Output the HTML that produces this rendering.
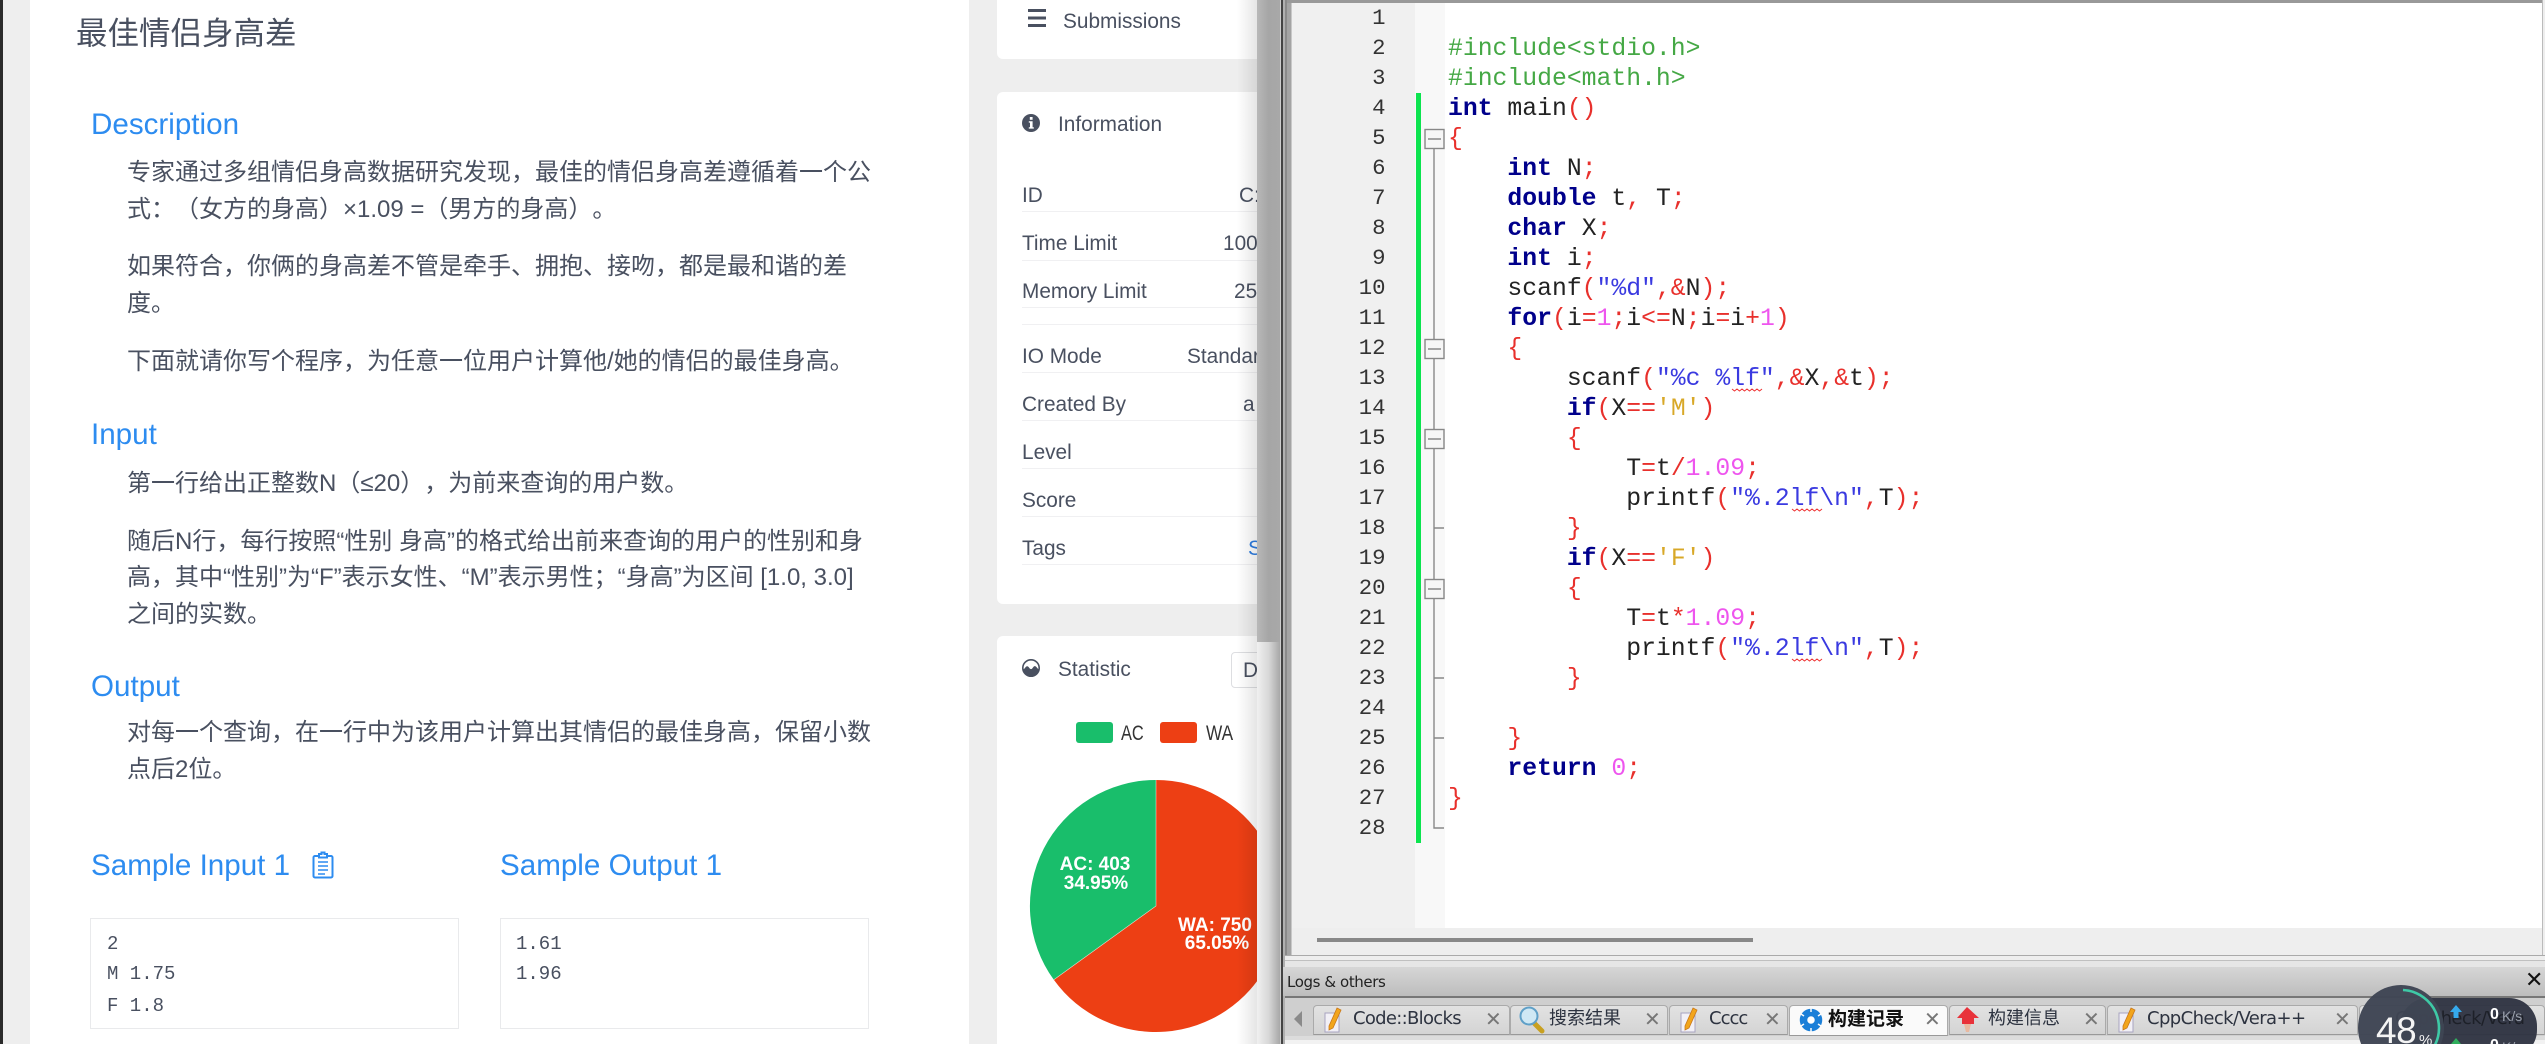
<!DOCTYPE html>
<html lang="zh-CN">
<head>
<meta charset="utf-8">
<title>最佳情侣身高差</title>
<style>
html,body{margin:0;padding:0;width:2545px;height:1044px;overflow:hidden;background:#eee}
body{position:relative;font-family:"Liberation Sans","Noto Sans CJK SC",sans-serif;color:#495060;text-spacing-trim:space-all}
.a{position:absolute}
.t{position:absolute;white-space:nowrap;line-height:40px;height:40px;margin-top:1.5px}
.d{font-size:24px;left:127px;color:#495060}
.h{font-size:29.6px;left:91px;color:#2d8cf0}
.r{font-size:20.8px;left:1022px;color:#495060}
.v{font-size:20.8px;color:#495060}
.b{position:absolute;left:1022px;width:235px;height:1px;background:#f0f0f2}
.m{font-family:"Liberation Mono",monospace;font-size:19px;color:#495060}
.card{position:absolute;background:#fff;border-radius:6px}
.pl{font-size:19px;font-weight:bold;color:#fff;width:100px;text-align:center;margin-top:0}
pre{margin:0;font-family:"Liberation Mono",monospace}
#code{position:absolute;left:1448px;top:3.5px;font-size:24.75px;line-height:30px;color:#222}
#nums{position:absolute;left:1300px;width:85.5px;top:3px;text-align:right;font-size:22.3px;line-height:30px;color:#333}
.k{color:#00008b;font-weight:bold}.o{color:#e8302c}.n{color:#ee55ee}.s{color:#3a3ae0}.c{color:#d8a828}.p{color:#45a845}
.tab{position:absolute;top:1005px;height:30px;background:linear-gradient(#e2e2e2,#d4d4d4);border:1px solid #aaa;border-bottom:1px solid #999;border-radius:4px 4px 0 0;box-sizing:border-box}
.tt{position:absolute;top:999px;line-height:40px;height:40px;white-space:nowrap;font-family:"DejaVu Sans","Noto Sans CJK SC",sans-serif;color:#2d3340}
.x{position:absolute;top:999px;line-height:40px;font-family:"DejaVu Sans",sans-serif;font-size:20px;color:#777}
</style>
</head>
<body>

<!-- LEFT PAGE -->
<div class="a" style="left:0;top:0;width:1257px;height:1044px;overflow:hidden;background:#eee">
  <div class="a" style="left:0;top:0;width:3px;height:1044px;background:#2b2b2b"></div>
  <div class="card" style="left:30px;top:-10px;width:939px;height:1070px;border-radius:0"></div>

  <div class="t" style="left:76px;top:11px;font-size:31.5px;color:#495060">最佳情侣身高差</div>

  <div class="t h" style="top:103px">Description</div>
  <div class="t d" style="top:151px">专家通过多组情侣身高数据研究发现，最佳的情侣身高差遵循着一个公</div>
  <div class="t d" style="top:188px">式：（女方的身高）×1.09 =（男方的身高）。</div>
  <div class="t d" style="top:245px">如果符合，你俩的身高差不管是牵手、拥抱、接吻，都是最和谐的差</div>
  <div class="t d" style="top:282px">度。</div>
  <div class="t d" style="top:340px">下面就请你写个程序，为任意一位用户计算他/她的情侣的最佳身高。</div>

  <div class="t h" style="top:413px">Input</div>
  <div class="t d" style="top:462px">第一行给出正整数N（≤20），为前来查询的用户数。</div>
  <div class="t d" style="top:520px">随后N行，每行按照“性别 身高”的格式给出前来查询的用户的性别和身</div>
  <div class="t d" style="top:556px">高，其中“性别”为“F”表示女性、“M”表示男性；“身高”为区间 [1.0, 3.0]</div>
  <div class="t d" style="top:593px">之间的实数。</div>

  <div class="t h" style="top:665px">Output</div>
  <div class="t d" style="top:711px">对每一个查询，在一行中为该用户计算出其情侣的最佳身高，保留小数</div>
  <div class="t d" style="top:748px">点后2位。</div>

  <div class="t h" style="top:844px">Sample Input 1</div>
  <svg class="a" style="left:311px;top:851px" width="24" height="28" viewBox="0 0 24 28" fill="none" stroke="#2d8cf0" stroke-width="2">
    <rect x="2.500" y="5" width="19" height="21.500" rx="1.500"/>
    <path d="M8 5V3h2.500V1.500h3V3H16v3.500H8z" fill="#fff"/>
    <path d="M7 11h10M7 15h10M7 19h10M7 23h7" stroke-width="1.600"/>
  </svg>
  <div class="t h" style="left:500px;top:844px">Sample Output 1</div>

  <div class="a" style="left:90px;top:918px;width:369px;height:111px;border:1px solid #e9eaec;box-sizing:border-box;background:#fff"></div>
  <div class="a" style="left:500px;top:918px;width:369px;height:111px;border:1px solid #e9eaec;box-sizing:border-box;background:#fff"></div>
  <div class="t m" style="left:107px;top:922px">2</div>
  <div class="t m" style="left:107px;top:952px">M 1.75</div>
  <div class="t m" style="left:107px;top:984px">F 1.8</div>
  <div class="t m" style="left:516px;top:922px">1.61</div>
  <div class="t m" style="left:516px;top:952px">1.96</div>

  <!-- right column cards -->
  <div class="card" style="left:997px;top:-20px;width:300px;height:79px"></div>
  <div class="card" style="left:997px;top:92px;width:300px;height:512px"></div>
  <div class="card" style="left:997px;top:636px;width:300px;height:430px"></div>

  <svg class="a" style="left:1028px;top:9px" width="18" height="19"><path d="M0 1.500h18M0 9h18M0 16.500h18" stroke="#495060" stroke-width="3"/></svg>
  <div class="t" style="left:1063px;top:0;font-size:20.8px">Submissions</div>

  <svg class="a" style="left:1022px;top:114px" width="18" height="18" viewBox="0 0 18 18"><circle cx="9" cy="9" r="9" fill="#495060"/><rect x="7.800" y="3" width="2.800" height="2.800" fill="#fff"/><path d="M6.800 7.200h3.800v6h1.200v1.400H6.800v-1.400H8V8.600H6.800z" fill="#fff"/></svg>
  <div class="t" style="left:1058px;top:103px;font-size:20.8px">Information</div>

  <div class="t r" style="top:174px">ID</div><div class="t v" style="left:1239px;top:174px">C:</div><div class="b" style="top:211px"></div>
  <div class="t r" style="top:222px">Time Limit</div><div class="t v" style="left:1223px;top:222px">1000</div><div class="b" style="top:260px"></div>
  <div class="t r" style="top:270px">Memory Limit</div><div class="t v" style="left:1234px;top:270px">256</div><div class="b" style="top:307px"></div>
  <div class="b" style="top:324px"></div>
  <div class="t r" style="top:335px">IO Mode</div><div class="t v" style="left:1187px;top:335px">Standard</div><div class="b" style="top:372px"></div>
  <div class="t r" style="top:383px">Created By</div><div class="t v" style="left:1243px;top:383px">a</div><div class="b" style="top:420px"></div>
  <div class="t r" style="top:431px">Level</div><div class="b" style="top:468px"></div>
  <div class="t r" style="top:479px">Score</div><div class="b" style="top:516px"></div>
  <div class="t r" style="top:527px">Tags</div><div class="t v" style="left:1248px;top:527px;color:#2d7ce0">Show</div><div class="b" style="top:564px"></div>

  <svg class="a" style="left:1022px;top:659px" width="18" height="18" viewBox="0 0 18 18"><circle cx="9" cy="9" r="8.200" fill="#fff" stroke="#495060" stroke-width="1.600"/><path d="M1 10.500c2-.5 2.500-3.200 4.200-3.200 1.800 0 2 2.800 3.800 2.800s2-3 3.800-3c1.600 0 2.500 2.600 4.200 3.400C17.200 14.500 13.500 18 9 18s-7.600-3.500-8-7.500z" fill="#495060"/></svg>
  <div class="t" style="left:1058px;top:648px;font-size:20.8px">Statistic</div>
  <div class="a" style="left:1231px;top:652px;width:60px;height:36px;border:1px solid #dddee1;border-radius:4px;box-sizing:border-box;background:#fff"></div>
  <div class="t v" style="left:1243px;top:649px">Default</div>

  <div class="a" style="left:1076px;top:722px;width:37px;height:21px;border-radius:3px;background:#19be6b"></div>
  <div class="t" style="left:1121px;top:712px;font-size:21px;color:#333;transform:scaleX(.78);transform-origin:left center">AC</div>
  <div class="a" style="left:1160px;top:722px;width:37px;height:21px;border-radius:3px;background:#ed3f14"></div>
  <div class="t" style="left:1206px;top:712px;font-size:21px;color:#333;transform:scaleX(.82);transform-origin:left center">WA</div>

  <svg class="a" style="left:1000px;top:760px" width="300" height="290" viewBox="1000 760 300 290">
    <path d="M1156 906V780A126 126 0 1 1 1053.800 979.800Z" fill="#ed3f14"/>
    <path d="M1156 906L1053.800 979.800A126 126 0 0 1 1156 780Z" fill="#19be6b"/>
    <path d="M1053.800 979.800L1156 906V780" fill="none" stroke="#fff" stroke-width=".6" stroke-opacity=".7"/>
  </svg>
  <div class="t pl" style="left:1045px;top:845px">AC: 403</div>
  <div class="t pl" style="left:1046px;top:864px">34.95%</div>
  <div class="t pl" style="left:1165px;top:906px">WA: 750</div>
  <div class="t pl" style="left:1167px;top:924px">65.05%</div>

  <!-- shadow fade -->
  <div class="a" style="left:1237px;top:0;width:20px;height:1044px;background:linear-gradient(90deg,rgba(0,0,0,0),rgba(0,0,0,.1))"></div>
</div>

<!-- scroll strip -->
<div class="a" style="left:1257px;top:0;width:23px;height:642px;background:linear-gradient(90deg,#b8b8b8,#a6a6a6 50%,#a8a8a8)"></div>
<div class="a" style="left:1257px;top:642px;width:23px;height:402px;background:linear-gradient(90deg,#f0f0f0,#d8d8d8 50%,#a8a8a8)"></div>

<!-- window frame -->
<div class="a" style="left:1280px;top:0;width:1265px;height:1044px;background:#c8c8c8"></div>
<div class="a" style="left:1280px;top:0;width:1px;height:1044px;background:#ccc"></div>
<div class="a" style="left:1281px;top:0;width:2px;height:1044px;background:#444"></div>
<div class="a" style="left:1283px;top:0;width:2px;height:1044px;background:#b0b0b0"></div>
<div class="a" style="left:1285px;top:0;width:2px;height:965px;background:#8a8a8a"></div>
<div class="a" style="left:1287px;top:0;width:4px;height:955px;background:#a4a4a4"></div>
<div class="a" style="left:1287px;top:0;width:1258px;height:3px;background:#999"></div>

<!-- editor -->
<div class="a" style="left:1292px;top:3px;width:1250px;height:952px;background:#fff"></div>
<div class="a" style="left:1292px;top:3px;width:123px;height:925px;background:#f0f0f0"></div>
<div class="a" style="left:1415px;top:3px;width:30px;height:925px;background:#f8f8f8"></div>
<div class="a" style="left:1292px;top:928px;width:1250px;height:27px;background:#eee"></div>
<div class="a" style="left:1317px;top:938px;width:436px;height:4px;background:#888"></div>
<div class="a" style="left:1416px;top:93px;width:5px;height:750px;background:#0ce44f"></div>

<svg class="a" style="left:1420px;top:0" width="30" height="850" viewBox="1420 0 30 850" fill="none" stroke="#888" stroke-width="1.400">
  <path d="M1434 148V828H1444M1434 528H1444M1434 678H1444M1434 738H1444"/>
  <g fill="#f6f6f6">
    <rect x="1425" y="129.500" width="19" height="19"/>
    <rect x="1425" y="339.500" width="19" height="19"/>
    <rect x="1425" y="429.500" width="19" height="19"/>
    <rect x="1425" y="579.500" width="19" height="19"/>
  </g>
  <path d="M1428 139H1441M1428 349H1441M1428 439H1441M1428 589H1441"/>
</svg>

<pre id="nums">1
2
3
4
5
6
7
8
9
10
11
12
13
14
15
16
17
18
19
20
21
22
23
24
25
26
27
28</pre>

<pre id="code">

<span class="p">#include&lt;stdio.h&gt;</span>
<span class="p">#include&lt;math.h&gt;</span>
<span class="k">int</span> main<span class="o">()</span>
<span class="o">{</span>
    <span class="k">int</span> N<span class="o">;</span>
    <span class="k">double</span> t<span class="o">,</span> T<span class="o">;</span>
    <span class="k">char</span> X<span class="o">;</span>
    <span class="k">int</span> i<span class="o">;</span>
    scanf<span class="o">(</span><span class="s">"%d"</span><span class="o">,&amp;</span>N<span class="o">);</span>
    <span class="k">for</span><span class="o">(</span>i<span class="o">=</span><span class="n">1</span><span class="o">;</span>i<span class="o">&lt;=</span>N<span class="o">;</span>i<span class="o">=</span>i<span class="o">+</span><span class="n">1</span><span class="o">)</span>
    <span class="o">{</span>
        scanf<span class="o">(</span><span class="s">"%c %lf"</span><span class="o">,&amp;</span>X<span class="o">,&amp;</span>t<span class="o">);</span>
        <span class="k">if</span><span class="o">(</span>X<span class="o">==</span><span class="c">'M'</span><span class="o">)</span>
        <span class="o">{</span>
            T<span class="o">=</span>t<span class="o">/</span><span class="n">1.09</span><span class="o">;</span>
            printf<span class="o">(</span><span class="s">"%.2lf\n"</span><span class="o">,</span>T<span class="o">);</span>
        <span class="o">}</span>
        <span class="k">if</span><span class="o">(</span>X<span class="o">==</span><span class="c">'F'</span><span class="o">)</span>
        <span class="o">{</span>
            T<span class="o">=</span>t<span class="o">*</span><span class="n">1.09</span><span class="o">;</span>
            printf<span class="o">(</span><span class="s">"%.2lf\n"</span><span class="o">,</span>T<span class="o">);</span>
        <span class="o">}</span>

    <span class="o">}</span>
    <span class="k">return</span> <span class="n">0</span><span class="o">;</span>
<span class="o">}</span></pre>

<svg class="a" style="left:1720px;top:380px" width="120" height="290" viewBox="1720 380 120 290" fill="none" stroke="#e33" stroke-width="1">
  <path d="M1732 389l2.500 2 2.500-2 2.500 2 2.500-2 2.500 2 2.500-2 2.500 2 2.500-2 2.500 2 2.500-2 2.500 2 2.500-2"/>
  <path d="M1792 509l2.500 2 2.500-2 2.500 2 2.500-2 2.500 2 2.500-2 2.500 2 2.500-2 2.500 2 2.500-2 2.500 2 2.500-2"/>
  <path d="M1792 659l2.500 2 2.500-2 2.500 2 2.500-2 2.500 2 2.500-2 2.500 2 2.500-2 2.500 2 2.500-2 2.500 2 2.500-2"/>
</svg>

<!-- right frame -->
<div class="a" style="left:2542px;top:0;width:1px;height:955px;background:#bbb"></div>
<div class="a" style="left:2543px;top:0;width:2px;height:955px;background:#eee"></div>

<!-- bottom panel -->
<div class="a" style="left:1285px;top:955px;width:1260px;height:1px;background:#aaa"></div>
<div class="a" style="left:1285px;top:956px;width:1260px;height:4px;background:#eee"></div>
<div class="a" style="left:1285px;top:960px;width:1260px;height:1px;background:#c0c0c0"></div>
<div class="a" style="left:1285px;top:961px;width:1260px;height:6px;background:#e6e6e6"></div>
<div class="a" style="left:1283px;top:967px;width:1262px;height:29px;background:linear-gradient(#d6d6d6,#bdbdbd)"></div>
<div class="t" style="left:1287px;top:960.500px;font-family:'DejaVu Sans',sans-serif;font-size:15px;letter-spacing:-.4px;color:#222">Logs &amp; others</div>
<div class="t" style="left:2525px;top:959.500px;font-family:'DejaVu Sans',sans-serif;font-size:22px;font-weight:bold;color:#111">✕</div>
<div class="a" style="left:1285px;top:996px;width:1260px;height:2px;background:#777"></div>
<div class="a" style="left:1285px;top:998px;width:1260px;height:38px;background:#cfcfcf"></div>
<div class="a" style="left:1285px;top:1036px;width:1260px;height:4px;background:#dcdcdc"></div>
<div class="a" style="left:1285px;top:1040px;width:1260px;height:4px;background:#f2f2f2"></div>
<svg class="a" style="left:1293px;top:1011px" width="10" height="16"><path d="M9 0V16L1 8z" fill="#8a8a8a"/></svg>

<div class="tab" style="left:1313px;width:197px"></div>
<div class="tab" style="left:1510px;width:158px"></div>
<div class="tab" style="left:1669px;width:119px"></div>
<div class="tab" style="left:1789px;width:159px;background:#fafafa;height:31px"></div>
<div class="tab" style="left:1949px;width:157px"></div>
<div class="tab" style="left:2107px;width:251px"></div>
<div class="tab" style="left:2359px;width:186px"></div>

<!-- pencil icons -->
<svg class="a" style="left:1324px;top:1007px" width="20" height="26" viewBox="0 0 20 26"><path d="M1 6h14v19H1z" fill="#f2f0f6" stroke="#a8a4c0"/><path d="M13 1l4 2-8 18-4 2 0-4z" fill="#f2a51c" stroke="#c9781a" stroke-width=".8"/></svg>
<svg class="a" style="left:1680px;top:1007px" width="20" height="26" viewBox="0 0 20 26"><path d="M1 6h14v19H1z" fill="#f2f0f6" stroke="#a8a4c0"/><path d="M13 1l4 2-8 18-4 2 0-4z" fill="#f2a51c" stroke="#c9781a" stroke-width=".8"/></svg>
<svg class="a" style="left:2118px;top:1007px" width="20" height="26" viewBox="0 0 20 26"><path d="M1 6h14v19H1z" fill="#f2f0f6" stroke="#a8a4c0"/><path d="M13 1l4 2-8 18-4 2 0-4z" fill="#f2a51c" stroke="#c9781a" stroke-width=".8"/></svg>
<!-- magnifier -->
<svg class="a" style="left:1519px;top:1006px" width="26" height="28" viewBox="0 0 26 28"><path d="M15 17l8 8" stroke="#c8a020" stroke-width="5" stroke-linecap="round"/><circle cx="10" cy="10" r="8.500" fill="#cfe8f4" stroke="#5fa0c8" stroke-width="2"/></svg>
<!-- gear -->
<svg class="a" style="left:1799px;top:1007px" width="24" height="26" viewBox="0 0 24 26"><circle cx="12" cy="13" r="7.500" fill="none" stroke="#1b7fd8" stroke-width="7.500"/><path d="M12 1v4M12 21v4M2 7l3 2M19 17l3 2M2 19l3-2M19 9l3-2" stroke="#fafafa" stroke-width="1.500"/><circle cx="12" cy="13" r="3.500" fill="#fff"/></svg>
<!-- build info -->
<svg class="a" style="left:1955px;top:1006px" width="26" height="28" viewBox="0 0 26 28"><path d="M12 1L24 12h-5v6H7v-6H2z" fill="#e8323a"/><path d="M9 18h7l-2 8h-3z" fill="#e9b9a0"/></svg>

<div class="tt" style="left:1353px;font-size:18px;letter-spacing:-.7px">Code::Blocks</div>
<div class="x" style="left:1485px">✕</div>
<div class="tt" style="left:1549px;font-size:18px">搜索结果</div>
<div class="x" style="left:1644px">✕</div>
<div class="tt" style="left:1709px;font-size:18px;letter-spacing:-1px">Cccc</div>
<div class="x" style="left:1764px">✕</div>
<div class="tt" style="left:1828px;font-size:19px;font-weight:bold;color:#111">构建记录</div>
<div class="x" style="left:1924px">✕</div>
<div class="tt" style="left:1988px;font-size:18px">构建信息</div>
<div class="x" style="left:2083px">✕</div>
<div class="tt" style="left:2147px;font-size:18px;letter-spacing:-.6px">CppCheck/Vera++</div>
<div class="x" style="left:2334px">✕</div>

<!-- net widget -->
<div class="a" style="left:2400px;top:998px;width:137px;height:60px;border-radius:28px;background:#2d3240;opacity:.95"></div>
<div class="tt" style="left:2395px;font-size:18px;letter-spacing:-.6px;color:#1d2028">CppCheck/Vera</div>
<svg class="a" style="left:2355px;top:982px" width="92" height="62" viewBox="2355 982 92 62">
  <circle cx="2401" cy="1028" r="43" fill="#3f4554" fill-opacity=".97"/>
  <path d="M2403 990A38 38 0 0 1 2411 1064.600" fill="none" stroke="#3ec9a6" stroke-width="2.600"/>
</svg>
<div class="t" style="left:2376px;top:1009px;font-size:37px;color:#f4f4f4;letter-spacing:-.5px;font-weight:normal">48</div>
<div class="t" style="left:2419px;top:1019px;font-size:15px;color:#f4f4f4">%</div>
<svg class="a" style="left:2449px;top:1005px" width="14" height="16"><path d="M7 0l6 7H9.500v6h-5V7H1z" fill="#35a9ec"/></svg>
<svg class="a" style="left:2449px;top:1038px" width="14" height="8"><path d="M7 0l5 6H2z" fill="#2fae5c"/></svg>
<div class="t" style="left:2490px;top:993px;font-size:16px;font-weight:bold;color:#fff">0</div>
<div class="t" style="left:2502px;top:994px;font-size:14px;color:#9aa0ac">K/s</div>
<div class="t" style="left:2490px;top:1024px;font-size:16px;font-weight:bold;color:#fff">0</div>
<div class="t" style="left:2502px;top:1025px;font-size:14px;color:#9aa0ac">K/s</div>

</body>
</html>
